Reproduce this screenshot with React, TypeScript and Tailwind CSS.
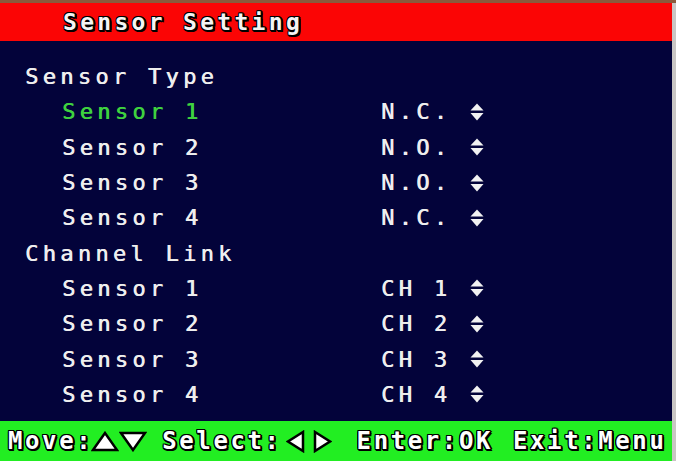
import React from "react";

const mono = "font-['DejaVu_Sans_Mono','Liberation_Mono',monospace]";
const outline =
  "[text-shadow:1px_0_0_#000,-1px_0_0_#000,0_1px_0_#000,0_-1px_0_#000,1px_1px_0_#000,-1px_-1px_0_#000,1px_-1px_0_#000,-1px_1px_0_#000,2px_0_0_#000,0_2px_0_#000,2px_2px_0_#000]";

function UpDown() {
  return (
    <svg width="14" height="18" viewBox="0 0 14 18" className="ml-[1px]">
      <polygon points="0.5,7.5 7,0.5 13.5,7.5" fill="#f2f2f2" />
      <polygon points="0.5,10 7,17.5 13.5,10" fill="#f2f2f2" />
    </svg>
  );
}

function Row({
  label,
  value,
  active,
}: {
  label: string;
  value?: string;
  active?: boolean;
}) {
  return (
    <div className="flex h-[35.3px] items-center">
      <div
        className={`w-[381px] pl-[62px] ${active ? "text-[#3fd23f]" : "text-[#eeeeee]"}`}
      >
        {label}
      </div>
      {value !== undefined && (
        <div className="flex items-center text-[#eeeeee]">
          <span className="w-[88px] whitespace-pre">{value}</span>
          <UpDown />
        </div>
      )}
    </div>
  );
}

function Section({ label }: { label: string }) {
  return (
    <div className="flex h-[35.3px] items-center pl-[25px] text-[#eeeeee]">
      {label}
    </div>
  );
}

function Tri({ dir }: { dir: "up" | "down" | "left" | "right" }) {
  if (dir === "up")
    return (
      <svg width="28" height="21" viewBox="0 0 28 21">
        <polygon points="2,19 14,2 26,19" fill="#fff" stroke="#000" strokeWidth="2.5" />
      </svg>
    );
  if (dir === "down")
    return (
      <svg width="28" height="21" viewBox="0 0 28 21">
        <polygon points="2,2 14,19 26,2" fill="#fff" stroke="#000" strokeWidth="2.5" />
      </svg>
    );
  if (dir === "left")
    return (
      <svg width="19" height="23" viewBox="0 0 19 23">
        <polygon points="17,2 2,11.5 17,21" fill="#fff" stroke="#000" strokeWidth="2.5" />
      </svg>
    );
  return (
    <svg width="19" height="23" viewBox="0 0 19 23">
      <polygon points="2,2 17,11.5 2,21" fill="#fff" stroke="#000" strokeWidth="2.5" />
    </svg>
  );
}

export default function App() {
  return (
    <div className={`flex h-[461px] w-[676px] flex-col overflow-hidden bg-[#c9c6c4] ${mono}`}>
      <div className="h-[3px] w-full bg-[#8a5a3c]" />
      <div className="flex flex-1">
        <div className="flex w-[672px] flex-col bg-[#03033a]">
          <div className="flex h-[38px] items-center bg-[#fb0505] pl-[63px]">
            <span
              className={`text-[23px] font-bold tracking-[3.3px] text-[#f4f4f4] ${outline}`}
            >
              Sensor Setting
            </span>
          </div>
          <div className="flex flex-1 flex-col pt-[18px] text-[22px] tracking-[4.3px] [text-shadow:0.6px_0_0_currentColor]">
            <Section label="Sensor Type" />
            <Row label="Sensor 1" value="N.C." active />
            <Row label="Sensor 2" value="N.O." />
            <Row label="Sensor 3" value="N.O." />
            <Row label="Sensor 4" value="N.C." />
            <Section label="Channel Link" />
            <Row label="Sensor 1" value="CH 1" />
            <Row label="Sensor 2" value="CH 2" />
            <Row label="Sensor 3" value="CH 3" />
            <Row label="Sensor 4" value="CH 4" />
          </div>
          <div
            className={`flex h-[40px] items-center bg-[#22ee22] pl-[8px] text-[24px] font-bold tracking-[2.6px] text-white ${outline}`}
          >
            <span>Move:</span>
            <span className="ml-[-2px] flex items-center">
              <Tri dir="up" />
              <Tri dir="down" />
            </span>
            <span className="ml-[15px]">Select:</span>
            <span className="ml-[4px] flex items-center gap-[8px]">
              <Tri dir="left" />
              <Tri dir="right" />
            </span>
            <span className="ml-[25px]">Enter:OK</span>
            <span className="ml-[20px]">Exit:Menu</span>
          </div>
        </div>
        <div className="w-[4px] bg-[#c9c6c4]" />
      </div>
    </div>
  );
}
